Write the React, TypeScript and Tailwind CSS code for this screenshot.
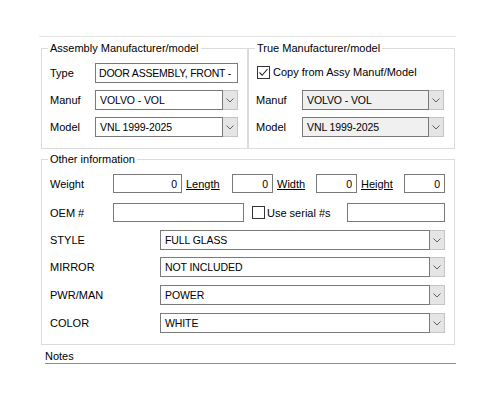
import React from 'react';

function Chevron() {
  return (
    <svg width="8" height="5" viewBox="0 0 8 5" className="block">
      <path d="M0.5 0.5 L4 4 L7.5 0.5" fill="none" stroke="#5f5f5f" strokeWidth="1" />
    </svg>
  );
}

function Combo({ value, width, disabled = false }: { value: string; width: string; disabled?: boolean }) {
  return (
    <div className={`flex h-[20px] ${width}`}>
      <div
        className={`flex-1 flex items-center border border-[#7a7a7a] pl-[4px] text-[10.5px] tracking-[-0.1px] whitespace-nowrap overflow-hidden ${
          disabled ? 'bg-[#f0f0f0]' : 'bg-white'
        }`}
      >
        {value}
      </div>
      <div className="w-[15px] flex items-center justify-center border-y border-r border-[#c4c4c4] bg-[#e5e5e5]">
        <Chevron />
      </div>
    </div>
  );
}

function TextBox({ value = '', width, right = false, h = 'h-[19px]' }: { value?: string; width: string; right?: boolean; h?: string }) {
  return (
    <div
      className={`flex items-center border border-[#7a7a7a] bg-white text-[10.5px] tracking-[-0.2px] whitespace-nowrap overflow-hidden ${h} ${width} ${
        right ? 'justify-end pr-[4px]' : 'pl-[3px]'
      }`}
    >
      {value}
    </div>
  );
}

function CheckBox({ checked }: { checked: boolean }) {
  return (
    <div className="w-[13px] h-[13px] border border-[#333333] bg-white flex items-center justify-center">
      {checked && (
        <svg width="11" height="11" viewBox="0 0 11 11">
          <path d="M1.5 5.5 L4.2 8.3 L9.5 2" fill="none" stroke="#222" strokeWidth="1.1" />
        </svg>
      )}
    </div>
  );
}

export default function App() {
  const attributes = [
    { label: 'STYLE', value: 'FULL GLASS', gap: 'mt-[8px]' },
    { label: 'MIRROR', value: 'NOT INCLUDED', gap: 'mt-[7px]' },
    { label: 'PWR/MAN', value: 'POWER', gap: 'mt-[8px]' },
    { label: 'COLOR', value: 'WHITE', gap: 'mt-[8px]' },
  ];

  return (
    <div className="w-[500px] h-[400px] bg-white text-[11px] leading-[14px] text-black font-['Liberation_Sans',Arial,sans-serif] overflow-hidden">
      <div className="pt-[36px] pl-[39px]">
        <div className="w-[417px] border-t border-[#e3e3e3]" />

        {/* Manufacturer groups */}
        <div className="ml-[2px] mt-[4px] flex">
          <fieldset className="w-[207px] h-[108px] border border-[#dcdcdc]">
            <legend className="ml-[6px] px-[2px] leading-[14px]">Assembly Manufacturer/model</legend>
            <div className="pl-[8px] pt-[8px] flex flex-col gap-[7px]">
              <div className="flex items-center h-[20px]">
                <span className="w-[45px]">Type</span>
                <TextBox value="DOOR ASSEMBLY, FRONT -" width="w-[143px]" h="h-[20px]" />
              </div>
              <div className="flex items-center h-[20px]">
                <span className="w-[45px]">Manuf</span>
                <Combo value="VOLVO - VOL" width="w-[143px]" />
              </div>
              <div className="flex items-center h-[20px]">
                <span className="w-[45px]">Model</span>
                <Combo value="VNL 1999-2025" width="w-[143px]" />
              </div>
            </div>
          </fieldset>

          <fieldset className="w-[207px] h-[108px] border border-[#dcdcdc]">
            <legend className="ml-[6px] px-[2px] leading-[14px]">True Manufacturer/model</legend>
            <div className="pl-[7px] pt-[7px] flex flex-col">
              <div className="flex items-center h-[20px] pl-[1px] gap-[3px]">
                <CheckBox checked />
                <span>Copy from Assy Manuf/Model</span>
              </div>
              <div className="flex items-center h-[20px] mt-[8px]">
                <span className="w-[46px]">Manuf</span>
                <Combo value="VOLVO - VOL" width="w-[142px]" disabled />
              </div>
              <div className="flex items-center h-[20px] mt-[7px]">
                <span className="w-[46px]">Model</span>
                <Combo value="VNL 1999-2025" width="w-[142px]" disabled />
              </div>
            </div>
          </fieldset>
        </div>

        {/* Other information */}
        <fieldset className="ml-[2px] mt-[3px] w-[414px] h-[193px] border border-[#dcdcdc]">
          <legend className="ml-[6px] px-[2px] leading-[14px]">Other information</legend>
          <div className="pl-[8px] pt-[8px] flex flex-col">
            <div className="flex items-center h-[19px]">
              <span className="w-[63px]">Weight</span>
              <TextBox value="0" width="w-[69px]" right />
              <span className="w-[50px] pl-[4px] underline">Length</span>
              <TextBox value="0" width="w-[41px]" right />
              <span className="w-[43px] pl-[4px] underline">Width</span>
              <TextBox value="0" width="w-[41px]" right />
              <span className="w-[47px] pl-[4px] underline">Height</span>
              <TextBox value="0" width="w-[41px]" right />
            </div>
            <div className="flex items-center h-[19px] mt-[10px]">
              <span className="w-[63px]">OEM #</span>
              <TextBox width="w-[131px]" />
              <div className="ml-[8px] w-[95px] flex items-center gap-[2px]">
                <CheckBox checked={false} />
                <span>Use serial #s</span>
              </div>
              <TextBox width="w-[98px]" />
            </div>
            {attributes.map((a) => (
              <div key={a.label} className={`flex items-center h-[20px] ${a.gap}`}>
                <span className="w-[110px]">{a.label}</span>
                <Combo value={a.value} width="w-[285px]" />
              </div>
            ))}
          </div>
        </fieldset>

        {/* Notes */}
        <div className="ml-[6px] mt-[5px] w-[411px] border-b border-[#8c8c8c] leading-[13px]">Notes</div>
      </div>
    </div>
  );
}
